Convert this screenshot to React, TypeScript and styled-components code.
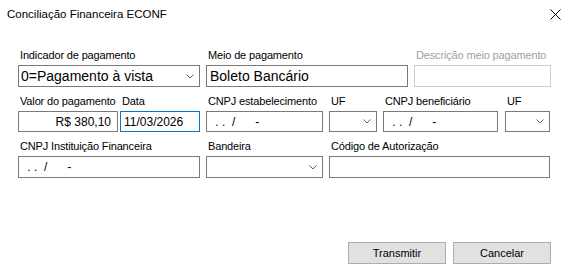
import styled, { createGlobalStyle } from "styled-components";

const GlobalStyle = createGlobalStyle`
  html, body {
    margin: 0;
    padding: 0;
    background: #ffffff;
  }
  body {
    font-family: "Liberation Sans", Arial, sans-serif;
    color: #000000;
  }
`;

const Window = styled.div`
  width: 569px;
  height: 278px;
  overflow: hidden;
  background: #ffffff;
  display: flex;
  flex-direction: column;
`;

const TitleBar = styled.div`
  height: 28px;
  display: flex;
  align-items: center;
  justify-content: space-between;
  padding: 0 8px 0 7px;
`;

const Title = styled.span`
  font-size: 11.5px;
  line-height: 28px;
`;

const CloseButton = styled.div`
  width: 12px;
  height: 12px;
  display: flex;
  align-items: center;
  justify-content: center;
`;

const Form = styled.div`
  padding: 21px 0 0 18px;
  display: flex;
  flex-direction: column;
  gap: 8px;
`;

const Row = styled.div`
  display: flex;
  align-items: flex-end;
`;

const Field = styled.div<{ $w: number; $gap?: number }>`
  width: ${(p) => p.$w}px;
  margin-left: ${(p) => p.$gap ?? 0}px;
  display: flex;
  flex-direction: column;
`;

const Label = styled.div<{ $disabled?: boolean }>`
  font-size: 11px;
  line-height: 13px;
  height: 13px;
  margin-bottom: 3px;
  padding-left: 2px;
  letter-spacing: -0.15px;
  white-space: nowrap;
  color: ${(p) => (p.$disabled ? "#a0a0a0" : "#000000")};
`;

const Box = styled.div<{
  $h: number;
  $fs: number;
  $disabled?: boolean;
  $focused?: boolean;
  $align?: "left" | "right";
}>`
  box-sizing: border-box;
  height: ${(p) => p.$h}px;
  border: 1px solid
    ${(p) => (p.$focused ? "#0078d7" : p.$disabled ? "#cccccc" : "#7a7a7a")};
  background: #ffffff;
  font-size: ${(p) => p.$fs}px;
  display: flex;
  align-items: center;
  justify-content: ${(p) => (p.$align === "right" ? "flex-end" : "flex-start")};
  padding: ${(p) => (p.$align === "right" ? "0 6px 0 2px" : "0 2px 0 3px")};
  white-space: pre;
  overflow: hidden;
`;

const Combo = styled(Box)`
  justify-content: space-between;
  padding: 0 5px 0 2px;
`;

const Mask = styled.span`
  font-size: 12px;
  padding-left: 2px;
`;

const Footer = styled.div`
  margin-top: 64px;
  padding-right: 18px;
  display: flex;
  justify-content: flex-end;
  gap: 7px;
`;

const Button = styled.button`
  box-sizing: border-box;
  width: 98px;
  height: 22px;
  background: #e1e1e1;
  border: 1px solid #adadad;
  font-family: "Liberation Sans", Arial, sans-serif;
  font-size: 11px;
  color: #000000;
  padding: 0;
`;

const Chevron = () => (
  <svg width="8" height="5" viewBox="0 0 8 5">
    <polyline points="0.5,0.5 4,4 7.5,0.5" fill="none" stroke="#606060" strokeWidth="1" />
  </svg>
);

const CNPJ_MASK = " . .  /      -";

export default function App() {
  return (
    <>
      <GlobalStyle />
      <Window>
        <TitleBar>
          <Title>Conciliação Financeira ECONF</Title>
          <CloseButton>
            <svg width="11" height="11" viewBox="0 0 11 11">
              <path d="M0.5 0.5 L10.5 10.5 M10.5 0.5 L0.5 10.5" stroke="#000" strokeWidth="1" />
            </svg>
          </CloseButton>
        </TitleBar>

        <Form>
          <Row>
            <Field $w={182}>
              <Label>Indicador de pagamento</Label>
              <Combo $h={22} $fs={14}>
                <span>0=Pagamento à vista</span>
                <Chevron />
              </Combo>
            </Field>
            <Field $w={202} $gap={6}>
              <Label>Meio de pagamento</Label>
              <Box $h={22} $fs={14}>Boleto Bancário</Box>
            </Field>
            <Field $w={137} $gap={6}>
              <Label $disabled>Descrição meio pagamento</Label>
              <Box $h={22} $fs={14} $disabled />
            </Field>
          </Row>

          <Row>
            <Field $w={100}>
              <Label>Valor do pagamento</Label>
              <Box $h={21} $fs={12} $align="right">R$ 380,10</Box>
            </Field>
            <Field $w={80} $gap={2}>
              <Label>Data</Label>
              <Box $h={21} $fs={12} $focused>11/03/2026</Box>
            </Field>
            <Field $w={117} $gap={6}>
              <Label>CNPJ estabelecimento</Label>
              <Box $h={21} $fs={12}><Mask>{CNPJ_MASK}</Mask></Box>
            </Field>
            <Field $w={48} $gap={6}>
              <Label>UF</Label>
              <Combo $h={21} $fs={12}>
                <span />
                <Chevron />
              </Combo>
            </Field>
            <Field $w={115} $gap={6}>
              <Label>CNPJ beneficiário</Label>
              <Box $h={21} $fs={12}><Mask>{CNPJ_MASK}</Mask></Box>
            </Field>
            <Field $w={45} $gap={7}>
              <Label>UF</Label>
              <Combo $h={21} $fs={12}>
                <span />
                <Chevron />
              </Combo>
            </Field>
          </Row>

          <Row>
            <Field $w={182}>
              <Label>CNPJ Instituição Financeira</Label>
              <Box $h={22} $fs={12}><Mask>{CNPJ_MASK}</Mask></Box>
            </Field>
            <Field $w={117} $gap={6}>
              <Label>Bandeira</Label>
              <Combo $h={22} $fs={12}>
                <span />
                <Chevron />
              </Combo>
            </Field>
            <Field $w={221} $gap={6}>
              <Label>Código de Autorização</Label>
              <Box $h={22} $fs={12} />
            </Field>
          </Row>
        </Form>

        <Footer>
          <Button>Transmitir</Button>
          <Button>Cancelar</Button>
        </Footer>
      </Window>
    </>
  );
}
